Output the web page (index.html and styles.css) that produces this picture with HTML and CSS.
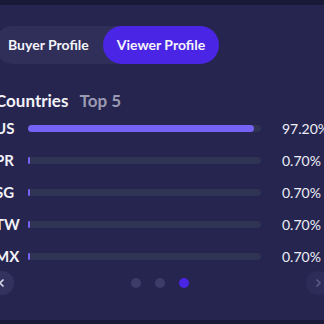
FILE: index.html
```html
<!DOCTYPE html>
<html lang="en">
<head>
	<meta charset="UTF-8">
	<title>Viewer Profile</title>
	<link rel="stylesheet" href="styles.css">
</head>
<body>
	<div class="card">
		<div class="toggle">
			<span class="tab">Buyer Profile</span>
			<span class="tab on">Viewer Profile</span>
		</div>

		<h3 class="title">Countries <span class="sub">Top 5</span></h3>

		<div class="rows">
			<div class="row">
				<span class="code">US</span>
				<div class="track"><div class="fill" style="width:97.2%"></div></div>
				<span class="pct">97.20%</span>
			</div>
			<div class="row">
				<span class="code">PR</span>
				<div class="track"><div class="fill" style="width:0.7%"></div></div>
				<span class="pct">0.70%</span>
			</div>
			<div class="row">
				<span class="code">SG</span>
				<div class="track"><div class="fill" style="width:0.7%"></div></div>
				<span class="pct">0.70%</span>
			</div>
			<div class="row">
				<span class="code">TW</span>
				<div class="track"><div class="fill" style="width:0.7%"></div></div>
				<span class="pct">0.70%</span>
			</div>
			<div class="row">
				<span class="code">MX</span>
				<div class="track"><div class="fill" style="width:0.7%"></div></div>
				<span class="pct">0.70%</span>
			</div>
		</div>

		<div class="nav">
			<a href="javascript:;" class="arrow prev">
				<svg width="10" height="10" viewBox="0 0 10 10"><polyline points="6.5,1.5 3,5 6.5,8.5" fill="none" stroke="#d6d6e6" stroke-width="1.6"/></svg>
			</a>
			<div class="dots">
				<span></span>
				<span></span>
				<span class="on"></span>
			</div>
			<a href="javascript:;" class="arrow next">
				<svg width="10" height="10" viewBox="0 0 10 10"><polyline points="3.5,1.5 7,5 3.5,8.5" fill="none" stroke="#5c5b86" stroke-width="1.6"/></svg>
			</a>
		</div>
	</div>
</body>
</html>
```

FILE: styles.css
```css
body {
	margin: 0;
	background: #1a1937;
	font-family: Lato, "Noto Sans", sans-serif;
	color: #f2f2f8;
	overflow: hidden;
}
.card {
	box-sizing: border-box;
	width: 350px;
	height: 315px;
	margin: 5px 0 0 -19px;
	padding: 21px 0 0 16px;
	background: #262550;
}
.toggle {
	display: inline-flex;
	margin-left: -3px;
	background: #302f5a;
	border-radius: 19px;
}
.tab {
	height: 38px;
	line-height: 38px;
	padding: 0 14px;
	border-radius: 19px;
	font-size: 14px;
	font-weight: 700;
	color: #f4f4fa;
}
.tab.on {
	background: #4a25e6;
}
.title {
	margin: 27px 0 1px -2px;
	font-size: 17px;
	line-height: 20px;
	font-weight: 700;
}
.title .sub {
	margin-left: 7px;
	color: #9b9ab2;
}
.row {
	display: flex;
	align-items: center;
	height: 32px;
}
.code {
	width: 33px;
	margin-left: -2px;
	font-size: 15px;
	font-weight: 700;
}
.track {
	width: 233px;
	height: 7px;
	border-radius: 4px;
	background: #2f3354;
	margin-right: 21px;
}
.fill {
	min-width: 2px;
	height: 100%;
	border-radius: 4px;
	background: #7662f4;
}
.pct {
	font-size: 14px;
	color: #eeeef6;
	white-space: nowrap;
}
.nav {
	display: flex;
	align-items: center;
	justify-content: space-between;
	width: 340px;
	height: 22px;
	margin-left: -7px;
}
.arrow {
	display: flex;
	align-items: center;
	justify-content: center;
	width: 24px;
	height: 24px;
	border-radius: 50%;
	background: #33325f;
}
.arrow.next {
	background: #2d2c58;
}
.dots {
	display: flex;
	gap: 14px;
}
.dots span {
	width: 10px;
	height: 10px;
	border-radius: 50%;
	background: #3d3c69;
}
.dots span.on {
	background: #4a25e6;
}
```
